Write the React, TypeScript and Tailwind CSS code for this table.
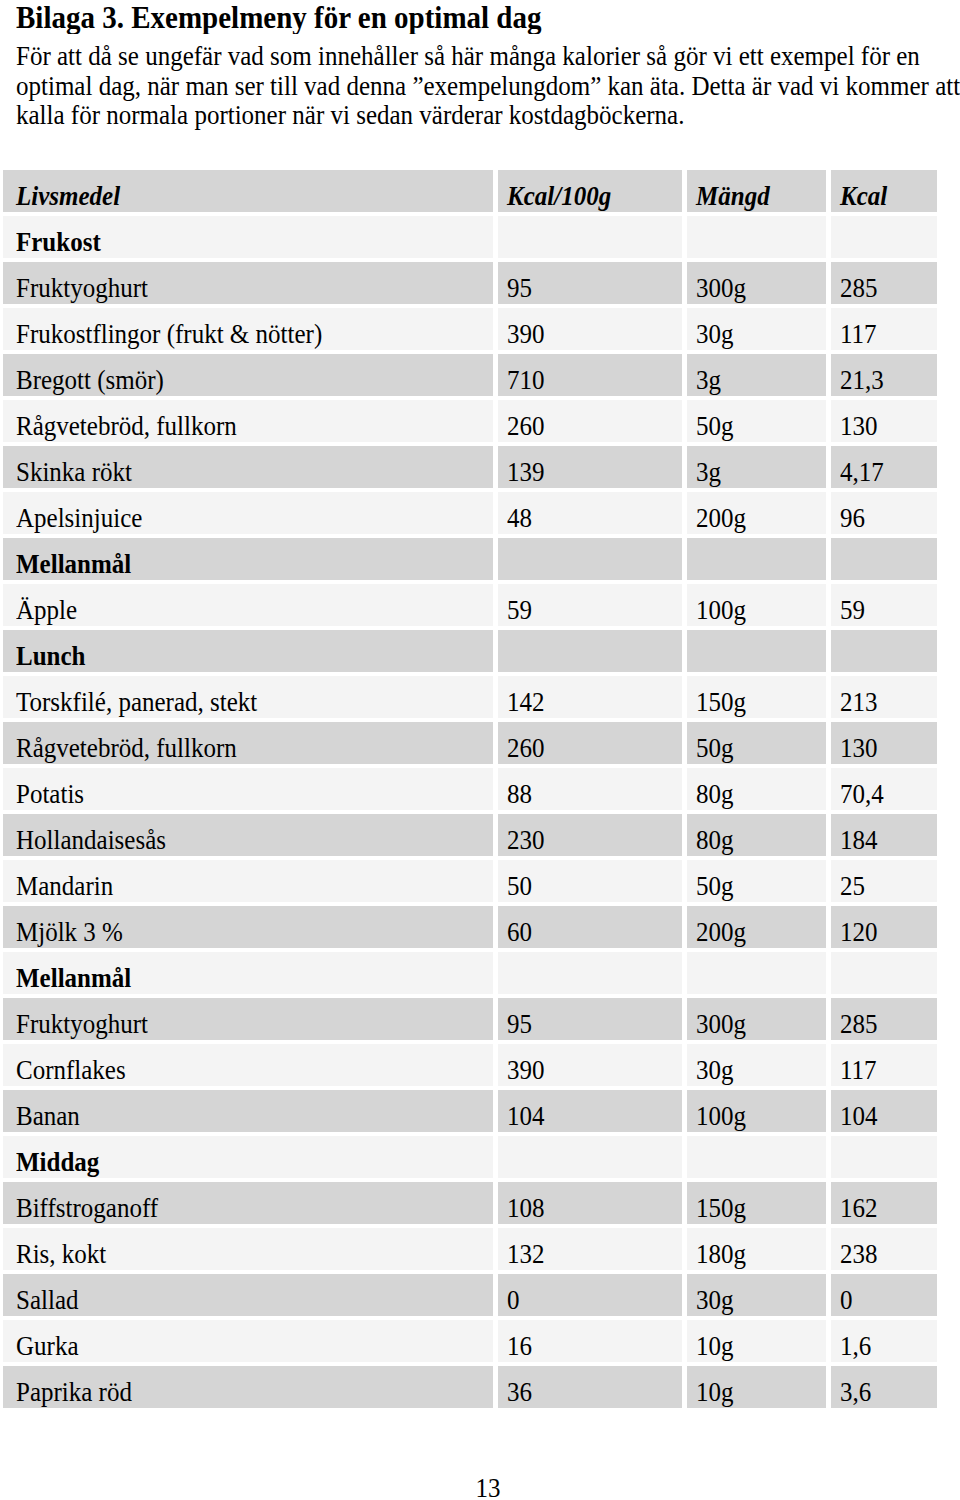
const rows: { name: string; a?: string; b?: string; c?: string; head?: boolean }[] = [
  { name: 'Frukost', head: true },
  { name: 'Fruktyoghurt', a: '95', b: '300g', c: '285' },
  { name: 'Frukostflingor (frukt & nötter)', a: '390', b: '30g', c: '117' },
  { name: 'Bregott (smör)', a: '710', b: '3g', c: '21,3' },
  { name: 'Rågvetebröd, fullkorn', a: '260', b: '50g', c: '130' },
  { name: 'Skinka rökt', a: '139', b: '3g', c: '4,17' },
  { name: 'Apelsinjuice', a: '48', b: '200g', c: '96' },
  { name: 'Mellanmål', head: true },
  { name: 'Äpple', a: '59', b: '100g', c: '59' },
  { name: 'Lunch', head: true },
  { name: 'Torskfilé, panerad, stekt', a: '142', b: '150g', c: '213' },
  { name: 'Rågvetebröd, fullkorn', a: '260', b: '50g', c: '130' },
  { name: 'Potatis', a: '88', b: '80g', c: '70,4' },
  { name: 'Hollandaisesås', a: '230', b: '80g', c: '184' },
  { name: 'Mandarin', a: '50', b: '50g', c: '25' },
  { name: 'Mjölk 3 %', a: '60', b: '200g', c: '120' },
  { name: 'Mellanmål', head: true },
  { name: 'Fruktyoghurt', a: '95', b: '300g', c: '285' },
  { name: 'Cornflakes', a: '390', b: '30g', c: '117' },
  { name: 'Banan', a: '104', b: '100g', c: '104' },
  { name: 'Middag', head: true },
  { name: 'Biffstroganoff', a: '108', b: '150g', c: '162' },
  { name: 'Ris, kokt', a: '132', b: '180g', c: '238' },
  { name: 'Sallad', a: '0', b: '30g', c: '0' },
  { name: 'Gurka', a: '16', b: '10g', c: '1,6' },
  { name: 'Paprika röd', a: '36', b: '10g', c: '3,6' },
]

function Cell({ text, gray, first, className }: { text?: string; gray: boolean; first?: boolean; className?: string }) {
  return (
    <div
      className={`flex h-[42px] items-end pb-[2px] ${first ? 'pl-[13px]' : 'pl-[9px]'} ${gray ? 'bg-[#d5d5d5]' : 'bg-[#f4f4f4]'}`}
    >
      <span className={`inline-block origin-center scale-y-[1.06] leading-[26px] whitespace-nowrap ${className ?? ''}`}>{text}</span>
    </div>
  )
}

export default function App() {
  return (
    <div className="min-h-[1500px] w-[960px] bg-white text-black" style={{ fontFamily: '"Liberation Serif", "Times New Roman", serif' }}>
      <h1 className="pl-4 pt-[3px] text-[29px] font-bold leading-[28px]">
        <span className="inline-block origin-center scale-y-[1.06]">Bilaga 3. Exempelmeny för en optimal dag</span>
      </h1>
      <p className="mt-[11px] pl-4 text-[25px] leading-[29.5px] whitespace-nowrap">
        <span className="inline-block origin-center scale-y-[1.06]">För att då se ungefär vad som innehåller så här många kalorier så gör vi ett exempel för en</span>
        <br />
        <span className="inline-block origin-center scale-y-[1.06]">optimal dag, när man ser till vad denna ”exempelungdom” kan äta. Detta är vad vi kommer att</span>
        <br />
        <span className="inline-block origin-center scale-y-[1.06]">kalla för normala portioner när vi sedan värderar kostdagböckerna.</span>
      </p>

      <div className="mt-[39px] ml-[3px] grid grid-cols-[490px_184px_139px_106px] gap-x-[5px] gap-y-[4px] text-[25px]">
        <Cell text="Livsmedel" gray first className="font-bold italic" />
        <Cell text="Kcal/100g" gray className="font-bold italic" />
        <Cell text="Mängd" gray className="font-bold italic" />
        <Cell text="Kcal" gray className="font-bold italic" />
        {rows.map((r, i) => {
          const gray = i % 2 === 1
          return [
            <Cell key={`${i}-n`} text={r.name} gray={gray} first className={r.head ? 'font-bold' : ''} />,
            <Cell key={`${i}-a`} text={r.a} gray={gray} />,
            <Cell key={`${i}-b`} text={r.b} gray={gray} />,
            <Cell key={`${i}-c`} text={r.c} gray={gray} />,
          ]
        })}
      </div>

      <div className="mt-[71px] text-center text-[25px] leading-[20px]">
        <span className="ml-[16px] inline-block origin-center scale-y-[1.06]">13</span>
      </div>
    </div>
  )
}
